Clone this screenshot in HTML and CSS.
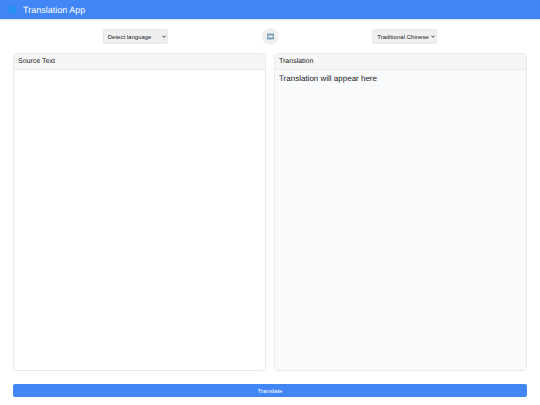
FILE: index.html
```html
<!DOCTYPE html>
<html lang="en">
<head>
    <meta charset="UTF-8">
    <meta name="viewport" content="width=device-width, initial-scale=1.0">
    <title>Translation App</title>
    <link rel="stylesheet" href="styles.css">
</head>
<body>
    <header class="app-header">
        <svg class="logo" viewBox="0 0 20 20" aria-hidden="true">
            <circle cx="10" cy="10" r="9" fill="#2196f3"/>
            <path d="M10 1v18M1 10h18M3 5h14M3 15h14M10 1c-6 5-6 13 0 18M10 1c6 5 6 13 0 18" fill="none" stroke="#2e86f5" stroke-width="1"/>
        </svg>
        <h1>Translation App</h1>
    </header>

    <main class="container">
        <div class="language-controls">
            <div class="select-box">
                <select id="sourceLanguage" class="language-select" aria-label="Source language">
                    <option>Detect language</option>
                    <option>English</option>
                    <option>Traditional Chinese</option>
                </select>
                <svg class="chevron" viewBox="0 0 10 6" aria-hidden="true"><path d="M1 1l4 4 4-4" fill="none" stroke="#111" stroke-width="2"/></svg>
            </div>
            <button id="swapBtn" class="swap-btn" type="button" aria-label="Swap languages">
                <svg viewBox="0 0 14 14" aria-hidden="true">
                    <rect y="1" width="14" height="12" rx="1" fill="#7fa3b8"/>
                    <path d="M2 7l3-3v2h4V4l3 3-3 3V8H5v2z" fill="#fff"/>
                </svg>
            </button>
            <div class="select-box">
                <select id="targetLanguage" class="language-select" aria-label="Target language">
                    <option>Traditional Chinese</option>
                    <option>English</option>
                </select>
                <svg class="chevron" viewBox="0 0 10 6" aria-hidden="true"><path d="M1 1l4 4 4-4" fill="none" stroke="#111" stroke-width="2"/></svg>
            </div>
        </div>

        <div class="panels">
            <section class="panel">
                <label class="panel-title" for="sourceText">Source Text</label>
                <textarea id="sourceText" class="panel-body"></textarea>
            </section>
            <section class="panel">
                <h2 class="panel-title">Translation</h2>
                <div id="translation" class="panel-body result">Translation will appear here</div>
            </section>
        </div>

        <button id="translateBtn" class="translate-btn" type="button">Translate</button>
    </main>
</body>
</html>
```

FILE: styles.css
```css
* {
    box-sizing: border-box;
    margin: 0;
    padding: 0;
}
body {
    display: flex;
    flex-direction: column;
    min-height: 100vh;
    font-family: "Liberation Sans", Arial, sans-serif;
    text-rendering: geometricPrecision;
    color: #202124;
    background-color: #fff;
}
.app-header {
    display: flex;
    align-items: center;
    gap: 6px;
    height: 19px;
    padding: 0 8px;
    color: #fff;
    background-color: #4285f4;
    box-shadow: 0 1px 1px rgba(66, 133, 244, 0.2);
}
.logo {
    width: 9px;
    height: 9px;
}
h1 {
    font-size: 9px;
    font-weight: normal;
    line-height: 12px;
}
.container {
    display: flex;
    flex: 1;
    flex-direction: column;
    padding: 9px 13px 8px;
}
.language-controls {
    display: grid;
    grid-template-columns: 1fr auto 1fr;
    gap: 4px;
    align-items: center;
    justify-items: center;
    margin-bottom: 8px;
}
.select-box {
    display: flex;
    position: relative;
}
.language-select {
    appearance: none;
    width: 65px;
    height: 15px;
    padding: 0 6px 0 4px;
    border: 1px solid #e8e8e8;
    border-radius: 2px;
    font-family: inherit;
    font-size: 6px;
    color: #202124;
    background-color: #efefef;
}
.chevron {
    position: absolute;
    top: 6px;
    right: 2px;
    width: 4px;
    height: 3px;
    pointer-events: none;
}
.swap-btn {
    display: flex;
    align-items: center;
    justify-content: center;
    width: 17px;
    height: 17px;
    border: none;
    border-radius: 50%;
    background-color: #f0f0f0;
}
.swap-btn svg {
    width: 7px;
    height: 7px;
}
.panels {
    display: grid;
    flex: 1;
    grid-template-columns: 1fr 1fr;
    gap: 8px;
    margin-bottom: 13px;
}
.panel {
    display: flex;
    flex-direction: column;
    overflow: hidden;
    border: 1px solid #e8eaed;
    border-radius: 4px;
}
.panel-title {
    padding: 3px 4px;
    border-bottom: 1px solid #e8eaed;
    font-size: 7px;
    font-weight: normal;
    line-height: 9px;
    background-color: #f5f5f5;
}
.panel-body {
    flex: 1;
    width: 100%;
    padding: 4px;
    border: none;
    outline: none;
    resize: none;
    font-family: inherit;
    font-size: 8px;
    line-height: 9px;
}
.result {
    background-color: #f8fafc;
}
.translate-btn {
    height: 13px;
    border: none;
    border-radius: 2px;
    font-family: inherit;
    font-size: 6px;
    color: #fff;
    background-color: #4285f4;
}
```
